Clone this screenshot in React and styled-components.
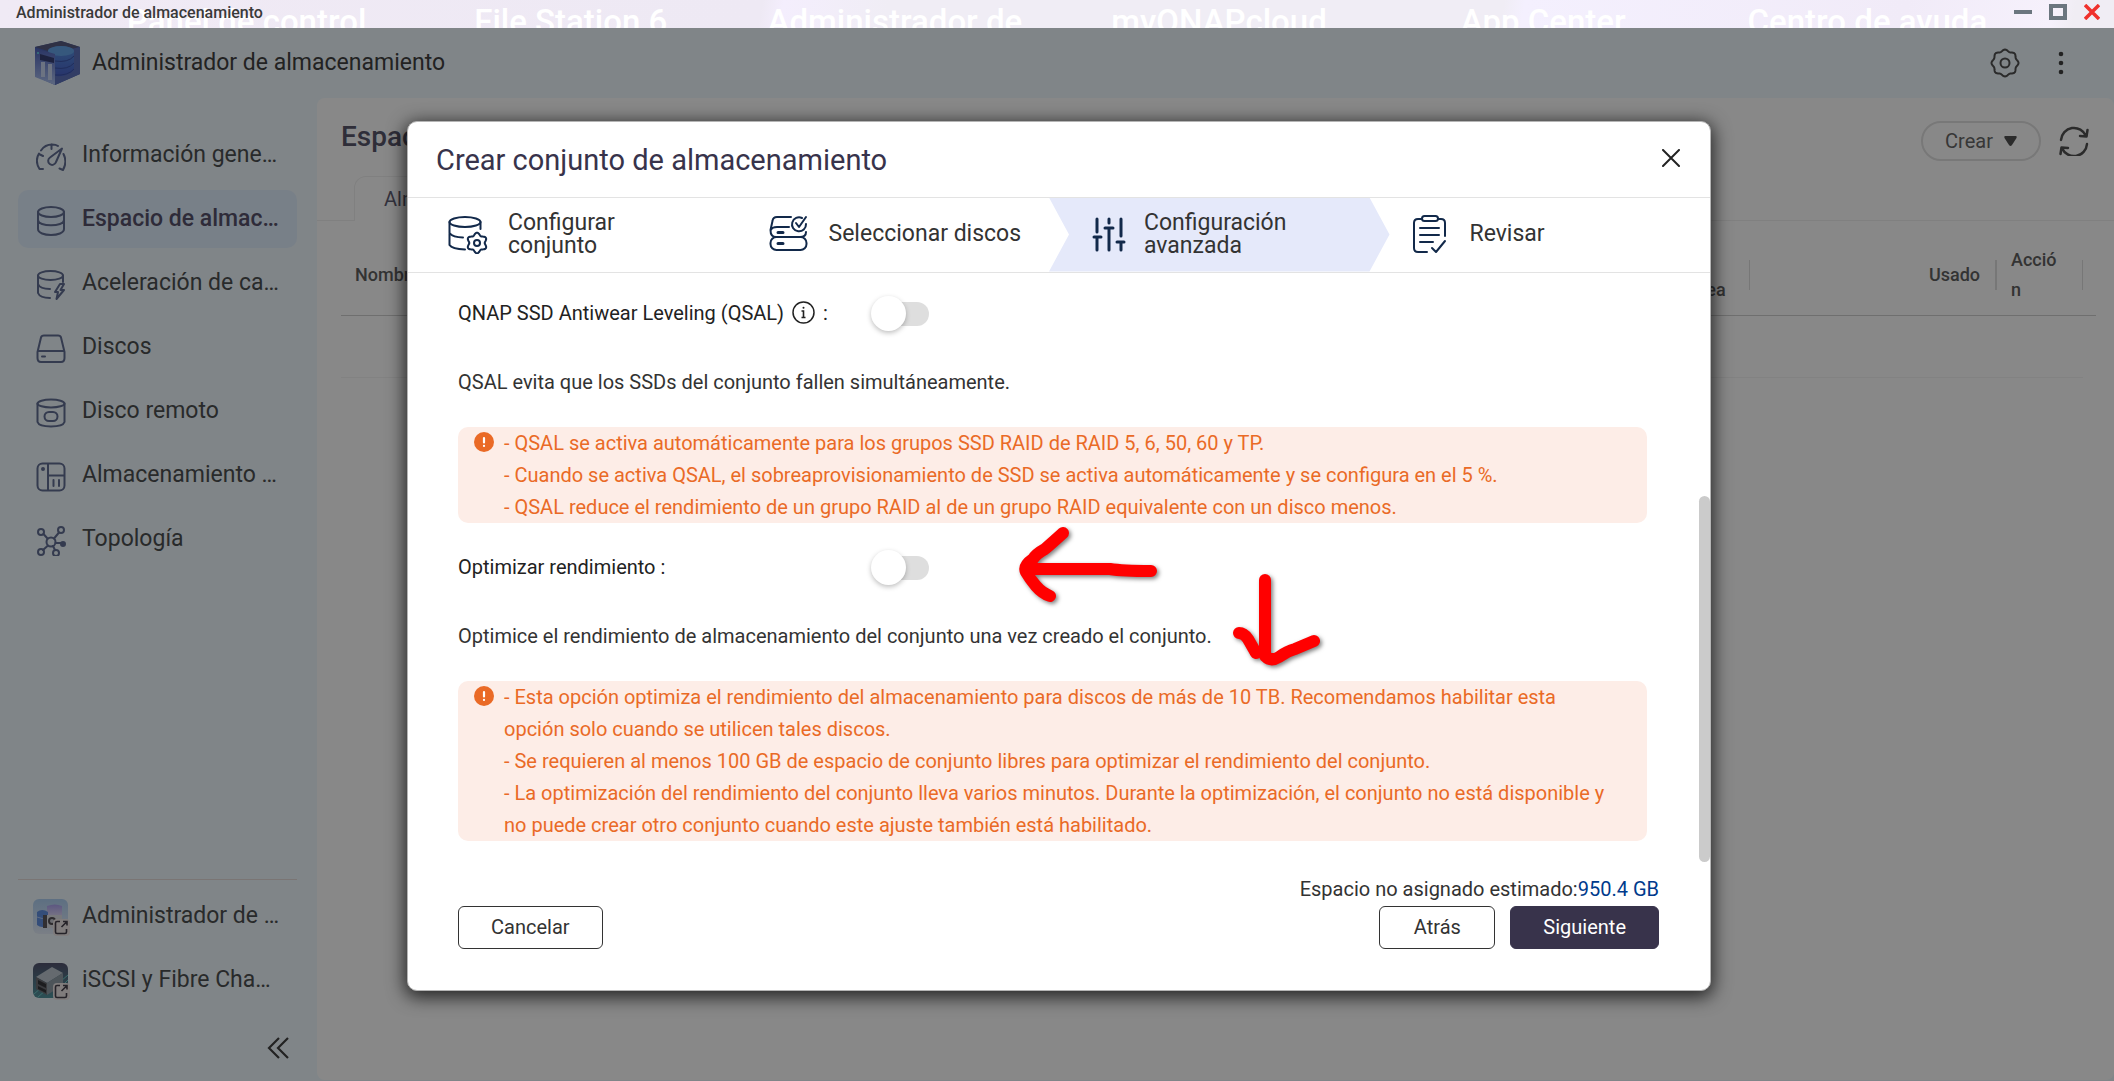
import React from "react";
import styled, { createGlobalStyle, css } from "styled-components";

const GlobalStyle = createGlobalStyle`
  * { box-sizing: border-box; }
  html, body, #root { height: 100%; }
  body {
    margin: 0;
    overflow: hidden;
    font-family: Roboto, "Liberation Sans", sans-serif;
    font-size: 20px;
    color: #333;
  }
  button { font: inherit; color: inherit; cursor: pointer; }
  h1, h2, p, ol, ul { margin: 0; padding: 0; }
  ol, ul { list-style: none; }
  svg { display: block; flex: none; }
`;

const Desktop = styled.div`
  height: 100%;
  display: flex;
  flex-direction: column;
`;

/* ---------- window title bar ---------- */

const TitleBar = styled.div`
  position: relative;
  flex: none;
  height: 28px;
  overflow: hidden;
  display: flex;
  align-items: center;
  justify-content: space-between;
  padding: 0 14px 4px 16px;
  background: linear-gradient(100deg, #f0eaf5 0%, #eee9f4 36%, #f4eefd 37%, #f0edf5 42%, #f0edf5 71%, #f4f0fe 72%, #f1ebf8 90%, #f6f1fc 97%, #f0edf4 98%);
`;

const DesktopLabels = styled.ul`
  position: absolute;
  inset: 6px 4% 0;
  display: grid;
  grid-template-columns: repeat(6, 1fr);
  color: #fff;
  font-size: 33px;
  line-height: 32px;
  font-weight: 500;
  text-align: center;
  white-space: nowrap;
`;

const WindowTitle = styled.span`
  position: relative;
  font-size: 16px;
  font-weight: 500;
  color: #3a3a3a;
`;

const WindowControls = styled.div`
  position: relative;
  display: flex;
  align-items: center;
  gap: 17px;
`;

const BareButton = styled.button`
  border: 0;
  padding: 0;
  background: none;
  display: grid;
  place-items: center;
`;

/* ---------- application window ---------- */

const AppWindow = styled.div`
  position: relative;
  flex: 1;
  min-height: 0;
  display: flex;
  flex-direction: column;
  background: #eff9ff;
`;

const AppHeader = styled.header`
  flex: none;
  height: 70px;
  display: flex;
  align-items: center;
  padding: 0 42px 1px 34px;
  gap: 11px;
`;

const AppTitle = styled.h1`
  flex: 1;
  font-size: 23px;
  font-weight: 400;
`;

const HeaderActions = styled.div`
  display: flex;
  align-items: center;
  gap: 30px;
`;

const AppBody = styled.div`
  flex: 1;
  min-height: 0;
  display: flex;
`;

const Sidebar = styled.nav`
  flex: none;
  width: 317px;
  padding: 28px 20px 16px 18px;
  display: flex;
  flex-direction: column;
  justify-content: space-between;
`;

const NavList = styled.ul`
  display: flex;
  flex-direction: column;
  gap: 6px;
`;

const BottomNav = styled.div`
  display: flex;
  flex-direction: column;
  border-top: 1px solid #e3d8d6;
  padding-top: 7px;
`;

const NavLink = styled.a`
  height: 58px;
  display: flex;
  align-items: center;
  gap: 16px;
  padding: 0 18px;
  border-radius: 10px;
  font-size: 23px;
  line-height: 32px;
  white-space: nowrap;
  text-decoration: none;
  color: #3f4344;
  ${(p) => p.$small && css`
    padding-left: 15px;
    gap: 12px;
  `}
  ${(p) => p.$active && css`
    background: #dfeeff;
    color: #4a4560;
    font-weight: 500;
  `}
  svg { margin-top: 3px; }
`;

const Collapse = styled(BareButton)`
  align-self: flex-end;
  margin: 22px 6px 0 0;
  width: 26px;
  height: 34px;
`;

const Content = styled.main`
  flex: 1;
  min-width: 0;
  margin-bottom: 1px;
  background: #fff;
  border-radius: 8px;
`;

const ContentHead = styled.div`
  height: 78px;
  display: flex;
  align-items: flex-start;
  justify-content: space-between;
  padding: 23px 25px 0 24px;
`;

const PageTitle = styled.h2`
  font-size: 28px;
  line-height: 32px;
  font-weight: 500;
  color: #4c4a60;
`;

const PageActions = styled.div`
  display: flex;
  align-items: center;
  gap: 18px;
`;

const CreateButton = styled.button`
  height: 40px;
  width: 120px;
  display: flex;
  align-items: center;
  justify-content: center;
  gap: 11px;
  border: 2px solid #dedede;
  border-radius: 20px;
  background: none;
  color: #5c5c5c;
`;

const TabStrip = styled.div`
  display: flex;
  &::before { content: ""; width: 37px; border-bottom: 1px solid #eee; }
  &::after { content: ""; flex: 1; border-bottom: 1px solid #eee; }
`;

const Tab = styled.button`
  height: 45px;
  padding: 0 29px;
  border: 1px solid #eee;
  border-bottom: 0;
  border-radius: 12px 12px 0 0;
  background: none;
  color: #55536a;
`;

const TableWrap = styled.div`
  padding: 15px 18px 0 24px;
`;

const PoolTable = styled.table`
  width: 100%;
  table-layout: fixed;
  border-collapse: collapse;
  td { height: 62px; padding: 0; }
  td:first-child { border-bottom: 1px solid #f3f3f3; }
`;

const HeadCell = styled.th`
  height: 79px;
  padding: 0;
  width: ${(p) => p.$width || "auto"};
  border-bottom: 1px solid #ccc;
  font-size: 18px;
  line-height: 30px;
  font-weight: 500;
  text-align: ${(p) => p.$align || "left"};
  color: #555;
`;

const HeadInner = styled.div`
  display: flex;
  align-items: center;
  justify-content: space-between;
  padding-left: 14px;
  &::after {
    content: "";
    width: ${(p) => (p.$thick ? "2px" : "1px")};
    height: 30px;
    background: #ddd;
  }
`;

const HeadText = styled.span`
  flex: 1;
  padding-right: ${(p) => p.$pad || "15px"};
  word-break: ${(p) => (p.$break ? "break-all" : "normal")};
`;

/* ---------- dialog ---------- */

const Backdrop = styled.div`
  position: absolute;
  inset: 0;
  display: flex;
  align-items: center;
  justify-content: center;
  padding: 2px 0 0 4px;
  background: rgba(17, 17, 17, 0.5);
`;

const Dialog = styled.section`
  position: relative;
  width: 100%;
  max-width: 1304px;
  display: flex;
  flex-direction: column;
  background: #fff;
  border: 1px solid #b5b5b5;
  border-radius: 10px;
  box-shadow: 0 4px 18px 2px rgba(0, 0, 0, 0.75);
`;

const DialogHead = styled.header`
  height: 75px;
  display: flex;
  align-items: center;
  justify-content: space-between;
  padding: 2px 27px 0 28px;
`;

const DialogTitle = styled.h2`
  font-size: 29px;
  line-height: 36px;
  font-weight: 400;
  color: #38334b;
`;

const CloseButton = styled(BareButton)`
  width: 24px;
  height: 28px;
  padding-bottom: 4px;
`;

const Steps = styled.ol`
  height: 76px;
  display: grid;
  grid-template-columns: repeat(4, 1fr);
  padding-right: 20px;
  border-top: 1px solid #e3e3e3;
  border-bottom: 1px solid #e3e3e3;
`;

const Step = styled.li`
  display: flex;
  align-items: center;
  gap: 20px;
  padding: 0 0 2px 40px;
  font-size: 23px;
  line-height: 23px;
  color: #333;
  ${(p) => p.$active && css`
    margin-right: -20px;
    padding-right: 60px;
    gap: 15px;
    background: #e5e9fa;
    clip-path: polygon(0 0, calc(100% - 20px) 0, 100% 50%, calc(100% - 20px) 100%, 0 100%, 20px 50%);
  `}
`;

const StepText = styled.span`
  max-width: ${(p) => (p.$narrow ? "160px" : "none")};
`;

const DialogBody = styled.div`
  display: flex;
  justify-content: space-between;
`;

const Settings = styled.div`
  flex: 1;
  padding: 23px 52px 21px 50px;
`;

const ScrollRail = styled.div`
  width: 11px;
  display: flex;
  align-items: flex-end;
  &::after {
    content: "";
    width: 11px;
    height: 62%;
    border-radius: 6px;
    background: #cbcbcb;
  }
`;

const SettingRow = styled.div`
  display: grid;
  grid-template-columns: 413px 1fr;
  align-items: center;
  height: 36px;
  color: #222;
`;

const SettingLabel = styled.label`
  display: flex;
  align-items: center;
  gap: 8px;
  padding-bottom: 2px;
  line-height: 32px;
`;

const Switch = styled.input`
  appearance: none;
  margin: 0;
  position: relative;
  width: 58px;
  height: 24px;
  border-radius: 12px;
  background: linear-gradient(90deg, transparent 12px, #dedede 12px);
  &::before {
    content: "";
    position: absolute;
    top: -6px;
    left: 0;
    width: 35px;
    height: 35px;
    border-radius: 50%;
    background: #fff;
    box-shadow: 0 2px 5px rgba(0, 0, 0, 0.25);
  }
`;

const Hint = styled.p`
  margin: 34px 0 29px;
  line-height: 32px;
`;

const Alert = styled.div`
  display: flex;
  align-items: flex-start;
  gap: 10px;
  margin-bottom: 27px;
  padding: 0 32px 0 16px;
  border-radius: 10px;
  background: #fdede7;
  color: #ea6a26;
  line-height: 32px;
  svg { margin-top: 5px; }
  &:last-child { margin-bottom: 0; }
`;

const DialogFoot = styled.footer`
  padding: 11px 51px 41px 50px;
`;

const Estimate = styled.p`
  margin-bottom: 1px;
  text-align: right;
  line-height: 32px;
  color: #333;
  strong { font-weight: 400; color: #003a8c; }
`;

const FootButtons = styled.div`
  display: flex;
  gap: 15px;
`;

const Button = styled.button`
  height: 43px;
  min-width: 116px;
  padding: 0 32px;
  border: 1px solid ${(p) => (p.$primary ? "#38334b" : "#333")};
  border-radius: 6px;
  background: ${(p) => (p.$primary ? "#38334b" : "#fff")};
  color: ${(p) => (p.$primary ? "#fff" : "#333")};
  &:first-child { margin-right: auto; }
`;

const Marks = styled.svg`
  position: absolute;
  left: 592px;
  top: 358px;
  pointer-events: none;
  filter: drop-shadow(2px 2px 2px rgba(0, 0, 0, 0.5));
`;

/* ---------- icons ---------- */

const Line = ({ size = 30, w = 2, color = "#57648c", children }) => (
  <svg width={size} height={size} viewBox="0 0 30 30" fill="none" stroke={color} strokeWidth={w} strokeLinecap="round" strokeLinejoin="round" aria-hidden="true">
    {children}
  </svg>
);

const GaugeIcon = () => (
  <Line>
    <path d="M7 27 H3.500 Q-1.500 19 3 11.500 M5 8.500 Q9 2.500 16 2.500 Q20 2.500 22 4 M15.500 2.500 V7 M27.500 12 Q31.500 20 27 28 L23.500 26.500 M3 12 L7 14" />
    <path d="M26 6.500 L20 20 A4 4 0 1 1 14 15.500 Z" />
  </Line>
);
const DatabaseIcon = () => (
  <Line>
    <ellipse cx="15" cy="6" rx="13" ry="5" />
    <path d="M2 6 V23 C2 31 28 31 28 23 V6 M2 14 C2 21 28 21 28 14" />
  </Line>
);
const CacheIcon = () => (
  <Line>
    <ellipse cx="14.500" cy="5.500" rx="12.500" ry="4.500" />
    <path d="M2 5.500 V23 Q4 28 14 28 M27 5.500 V12 M2 14 Q4 19 14 19 M24 14 L19 22 H22 L20.500 29 L28 20 H24.500 L28 14 Z" />
  </Line>
);
const DiskIcon = () => (
  <Line>
    <path d="M5 3.500 Q5.500 1.500 8 1.500 H22 Q24.500 1.500 25 3.500 L28.500 18 V24 Q28.500 28 25 28 H5 Q1.500 28 1.500 24 V18 Z M2 17 H28 M6 22.500 H9" />
  </Line>
);
const RemoteIcon = () => (
  <Line>
    <ellipse cx="15" cy="5.500" rx="13.500" ry="4" />
    <path d="M1.500 5.500 V24 Q3 28.500 15 28.500 Q27 28.500 28.500 24 V5.500" />
    <rect x="8.500" y="14" width="13" height="9" rx="4.500" />
  </Line>
);
const ExternalIcon = () => (
  <Line>
    <rect x="1.500" y="1.500" width="27" height="27" rx="5" />
    <path d="M12 2 V28 M12 13.500 H28 M17.500 18 V24 M23 18 V24" />
    <circle cx="7" cy="7" r="1" />
  </Line>
);
const TopologyIcon = () => (
  <Line>
    <circle cx="15" cy="16" r="4.500" />
    <circle cx="5" cy="6" r="3" />
    <circle cx="25" cy="4" r="3" />
    <circle cx="5" cy="26" r="3" />
    <circle cx="20" cy="27" r="3" />
    <circle cx="27" cy="18" r="2" fill="#57648c" />
    <path d="M7.500 8 L11.500 12.500 M23 6.500 L18 12.500 M7 24 L12 19.500 M19 24 L17 20 M19.500 17 H26" />
  </Line>
);

const ShortcutBadge = () => (
  <g>
    <rect x="20" y="20" width="17" height="17" rx="4" fill="#eee7e7" />
    <path d="M27 22.500 H24 Q22.500 22.500 22.500 24 V33 Q22.500 34.500 24 34.500 H32 Q33.500 34.500 33.500 33 V30 M30 22.500 H34 V26.500 M34 22.500 L28.500 28" fill="none" stroke="#3b3540" strokeWidth="1.600" />
  </g>
);
const SnapshotIcon = () => (
  <svg width="37" height="37" viewBox="0 0 37 37" aria-hidden="true">
    <defs>
      <linearGradient id="snapBg" x1="0" y1="0" x2="0" y2="1"><stop stopColor="#a9cdf2" /><stop offset="1" stopColor="#e3ecfa" /></linearGradient>
      <linearGradient id="snapDisk" x1="0" y1="0" x2="0" y2="1"><stop stopColor="#a79cf0" /><stop offset="1" stopColor="#e4def8" /></linearGradient>
    </defs>
    <rect width="35" height="35" rx="6" fill="url(#snapBg)" />
    <path d="M14 7 Q22 4 29 7 V19 H14 Z" fill="url(#snapDisk)" />
    <path d="M4 13 Q9 9 15 13 V26 Q9 30 4 26 Z" fill="#5688e0" />
    <path d="M4 18 Q9 21 15 18" fill="none" stroke="#a8c6f8" />
    <rect x="10" y="16" width="19" height="13" rx="1" fill="#dfe1e6" />
    <rect x="10" y="16" width="4" height="13" fill="#514c53" />
    <circle cx="19" cy="22" r="4" fill="#49454b" />
    <circle cx="19" cy="22" r="2" fill="#c6c9d3" />
    <ShortcutBadge />
  </svg>
);
const IscsiIcon = () => (
  <svg width="37" height="37" viewBox="0 0 37 37" aria-hidden="true">
    <defs>
      <linearGradient id="iscsiBg" x1="0" y1="0" x2="0" y2="1"><stop stopColor="#464765" /><stop offset="1" stopColor="#478e98" /></linearGradient>
    </defs>
    <rect width="35" height="35" rx="6" fill="url(#iscsiBg)" />
    <path d="M1 31 L8 25 M5 34 L13 27 M28 18 L35 12 M30 22 L35 17" stroke="#64c8c6" strokeWidth="1" />
    <path d="M3 14 L19 4 L30 10 L14 20 Z" fill="#b8c3cc" />
    <path d="M14 20 L30 10 V22 L14 32 Z" fill="#8997a1" />
    <path d="M3 14 L14 20 V32 L3 26 Z" fill="#62656b" />
    <path d="M5 17 L13 21 V25 L5 21 Z M5 23 L13 27 V30 L5 26 Z" fill="#26282c" />
    <ShortcutBadge />
  </svg>
);
const LogoIcon = () => (
  <svg width="47" height="44" viewBox="0 0 47 44" aria-hidden="true">
    <defs>
      <linearGradient id="logoSide" x1="0" y1="0" x2="0" y2="1"><stop stopColor="#4258b8" /><stop offset="1" stopColor="#a9bff0" /></linearGradient>
      <linearGradient id="logoDb" x1="0" y1="0" x2="0" y2="1"><stop stopColor="#4b8bdf" /><stop offset="1" stopColor="#3d56c6" /></linearGradient>
    </defs>
    <path d="M1 6 L27 0 L46 6 V33 L21 44 L1 35 Z" fill="#4058aa" />
    <path d="M1 6 L27 0 L46 6 L21 12 Z" fill="#4c5078" />
    <path d="M21 12 L46 6 V33 L21 44 Z" fill="#5269b8" />
    <path d="M14 10 C14 4 40 4 40 10 V29 Q34 36 22 35 L20 14 Z" fill="url(#logoDb)" />
    <ellipse cx="27" cy="10" rx="13" ry="5" fill="#5b9ee8" />
    <path d="M21 20 Q34 22 40 15 M21 27 Q34 29 40 22 M21 34 Q34 35 40 28" fill="none" stroke="#2f49a4" strokeWidth="1" />
    <path d="M1 7 L21 13 V44 L1 36 Z" fill="url(#logoSide)" />
    <path d="M6 13 L20 17 V22 L6 19 Z" fill="#28336c" />
    <path d="M9 21 V36 M16 23 V39" stroke="#c7d4f3" strokeWidth="4" />
    <circle cx="4" cy="12" r="1" fill="#5be0e8" />
  </svg>
);

const gear = (cx, cy, r, amp, teeth) => {
  const pts = [];
  for (let i = 0; i < 96; i++) {
    const a = (i / 96) * Math.PI * 2 - Math.PI / 2;
    const d = r + amp * Math.cos(a * teeth + (teeth * Math.PI) / 2);
    pts.push(`${(cx + d * Math.cos(a)).toFixed(2)} ${(cy + d * Math.sin(a)).toFixed(2)}`);
  }
  return `M${pts.join("L")}Z`;
};

const navy = "#12294a";
const Big = ({ children }) => (
  <svg width="40" height="40" viewBox="0 0 40 40" fill="none" stroke={navy} strokeWidth="2" strokeLinecap="round" strokeLinejoin="round" aria-hidden="true">
    {children}
  </svg>
);
const PoolStepIcon = () => (
  <Big>
    <ellipse cx="17" cy="8" rx="15.500" ry="5" />
    <path d="M1.500 8 V31 Q4 35 17 35.500 M32.500 8 V15 M1.500 19 Q5 23.500 15 23.500" />
    <path d={gear(29, 29, 9, 1.3, 6)} />
    <ellipse cx="29" cy="29" rx="3" ry="3" />
  </Big>
);
const DisksStepIcon = () => (
  <Big>
    <path d="M22 3 H8 Q4 3 3.500 7 L1.500 16 Q1.500 23 7 23 H31 Q37 23 37 18 M20 13 H8 Q3 13 2 16" />
    <rect x="1.500" y="23" width="36" height="13" rx="6" />
    <path d="M9 18.500 H14 M9 29.500 H14" strokeWidth="3" />
    <path d="M33 4 A7 7 0 1 0 37 10 M27 9 L30 13 L37 3" />
  </Big>
);
const SlidersStepIcon = () => (
  <Big>
    <path d="M8 5 V18 M8 23 V36 M20 5 V9 M20 14 V36 M32 5 V22 M32 28 V36 M5 23 H12 M16 14 H24 M28 28 H35" strokeWidth="3" />
  </Big>
);
const ReviewStepIcon = () => (
  <Big>
    <path d="M12 5 H8 Q4 5 4 9 V34 Q4 38 8 38 H17 M28 5 H31 Q35 5 35 9 V22 M10 14 H29 M10 21 H29 M10 28 H23 M22 34 L26 38 L35 27" />
    <rect x="12" y="2" width="16" height="5" rx="2.500" />
  </Big>
);

const AlertIcon = () => (
  <svg width="20" height="20" viewBox="0 0 20 20" aria-hidden="true">
    <circle cx="10" cy="10" r="10" fill="#ea6a26" />
    <path d="M10 6 V10.500 M10 13.800 V14" stroke="#fff" strokeWidth="2.200" strokeLinecap="round" />
  </svg>
);
const InfoIcon = () => (
  <svg width="23" height="23" viewBox="0 0 23 23" fill="none" stroke="#222" aria-hidden="true">
    <circle cx="11.500" cy="11.500" r="10.500" strokeWidth="1.500" />
    <path d="M9.500 10 H11.500 V16.500 M9.500 16.500 H13.500" strokeWidth="1.600" />
    <circle cx="11.500" cy="6.700" r="1" fill="#222" stroke="none" />
  </svg>
);

/* ---------- page ---------- */

const desktopApps = ["Panel de control", "File Station 6", "Administrador de", "myQNAPcloud", "App Center", "Centro de ayuda"];

const navItems = [
  ["Información gene…", GaugeIcon],
  ["Espacio de almac…", DatabaseIcon, true],
  ["Aceleración de ca…", CacheIcon],
  ["Discos", DiskIcon],
  ["Disco remoto", RemoteIcon],
  ["Almacenamiento …", ExternalIcon],
  ["Topología", TopologyIcon],
];

const shortcuts = [
  ["Administrador de …", SnapshotIcon],
  ["iSCSI y Fibre Cha…", IscsiIcon],
];

const steps = [
  ["Configurar conjunto", PoolStepIcon],
  ["Seleccionar discos", DisksStepIcon],
  ["Configuración avanzada", SlidersStepIcon],
  ["Revisar", ReviewStepIcon],
];

function PoolDialog() {
  return (
    <Dialog role="dialog" aria-labelledby="dialog-title">
      <DialogHead>
        <DialogTitle id="dialog-title">Crear conjunto de almacenamiento</DialogTitle>
        <CloseButton aria-label="Cerrar">
          <svg width="18" height="18" viewBox="0 0 18 18" stroke="#222" strokeWidth="2" strokeLinecap="round" aria-hidden="true">
            <path d="M1 1 L17 17 M17 1 L1 17" />
          </svg>
        </CloseButton>
      </DialogHead>
      <Steps>
        {steps.map(([text, Icon], i) => (
          <Step key={text} $active={i === 2}>
            <Icon />
            <StepText $narrow={i === 0 || i === 2}>{text}</StepText>
          </Step>
        ))}
      </Steps>
      <DialogBody>
        <Settings>
          <SettingRow>
            <SettingLabel htmlFor="qsal">QNAP SSD Antiwear Leveling (QSAL) <InfoIcon /> :</SettingLabel>
            <Switch id="qsal" type="checkbox" role="switch" />
          </SettingRow>
          <Hint>QSAL evita que los SSDs del conjunto fallen simultáneamente.</Hint>
          <Alert>
            <AlertIcon />
            <div>
              <p>- QSAL se activa automáticamente para los grupos SSD RAID de RAID 5, 6, 50, 60 y TP.</p>
              <p>- Cuando se activa QSAL, el sobreaprovisionamiento de SSD se activa automáticamente y se configura en el 5 %.</p>
              <p>- QSAL reduce el rendimiento de un grupo RAID al de un grupo RAID equivalente con un disco menos.</p>
            </div>
          </Alert>
          <SettingRow>
            <SettingLabel htmlFor="optimize">Optimizar rendimiento :</SettingLabel>
            <Switch id="optimize" type="checkbox" role="switch" />
          </SettingRow>
          <Hint>Optimice el rendimiento de almacenamiento del conjunto una vez creado el conjunto.</Hint>
          <Alert>
            <AlertIcon />
            <div>
              <p>- Esta opción optimiza el rendimiento del almacenamiento para discos de más de 10 TB. Recomendamos habilitar esta opción solo cuando se utilicen tales discos.</p>
              <p>- Se requieren al menos 100 GB de espacio de conjunto libres para optimizar el rendimiento del conjunto.</p>
              <p>- La optimización del rendimiento del conjunto lleva varios minutos. Durante la optimización, el conjunto no está disponible y no puede crear otro conjunto cuando este ajuste también está habilitado.</p>
            </div>
          </Alert>
        </Settings>
        <ScrollRail />
      </DialogBody>
      <DialogFoot>
        <Estimate>Espacio no asignado estimado:<strong>950.4 GB</strong></Estimate>
        <FootButtons>
          <Button>Cancelar</Button>
          <Button>Atrás</Button>
          <Button $primary>Siguiente</Button>
        </FootButtons>
      </DialogFoot>
      <Marks width="400" height="220" viewBox="0 30 400 220" fill="none" stroke="#f00" strokeWidth="12" strokeLinecap="round" strokeLinejoin="round" aria-hidden="true">
        <path d="M34 119 H110 Q122 121 151 121" />
        <path d="M63 83 Q52 93 45 99 Q36 104 33 109 Q23 116 26 122 Q30 129 36 136 Q42 143 50 146" />
        <path d="M265 130 V203" />
        <path d="M239 183 Q244 183 248 189 L256 203" />
        <path d="M265 206 Q271 212 279 207 Q287 201 295 199 L314 191" />
      </Marks>
    </Dialog>
  );
}

export default function App() {
  return (
    <Desktop>
      <GlobalStyle />
      <TitleBar>
        <DesktopLabels>
          {desktopApps.map((name) => <li key={name}>{name}</li>)}
        </DesktopLabels>
        <WindowTitle>Administrador de almacenamiento</WindowTitle>
        <WindowControls>
          <BareButton aria-label="Minimizar">
            <svg width="18" height="16" viewBox="0 0 18 16" aria-hidden="true"><rect y="6" width="18" height="4" fill="#6b767f" /></svg>
          </BareButton>
          <BareButton aria-label="Maximizar">
            <svg width="18" height="16" viewBox="0 0 18 16" aria-hidden="true"><rect x="2" y="2" width="14" height="12" fill="none" stroke="#6b767f" strokeWidth="4" /></svg>
          </BareButton>
          <BareButton aria-label="Cerrar ventana">
            <svg width="16" height="16" viewBox="0 0 16 16" aria-hidden="true"><path d="M1 1 L15 15 M15 1 L1 15" stroke="#f0312c" strokeWidth="3.500" /></svg>
          </BareButton>
        </WindowControls>
      </TitleBar>
      <AppWindow>
        <AppHeader>
          <LogoIcon />
          <AppTitle>Administrador de almacenamiento</AppTitle>
          <HeaderActions>
            <BareButton aria-label="Configuración">
              <Line color="#444" w={2}>
                <path d={gear(15, 15, 12.6, 0.9, 8)} />
                <circle cx="15" cy="15" r="4.500" />
              </Line>
            </BareButton>
            <BareButton aria-label="Más opciones">
              <svg width="22" height="24" viewBox="0 0 22 24" fill="#333" aria-hidden="true">
                <circle cx="11" cy="3" r="2.300" /><circle cx="11" cy="12" r="2.300" /><circle cx="11" cy="21" r="2.300" />
              </svg>
            </BareButton>
          </HeaderActions>
        </AppHeader>
        <AppBody>
          <Sidebar>
            <NavList>
              {navItems.map(([text, Icon, active]) => (
                <li key={text}><NavLink href="#" $active={active}><Icon />{text}</NavLink></li>
              ))}
            </NavList>
            <BottomNav>
              <NavList>
                {shortcuts.map(([text, Icon]) => (
                  <li key={text}><NavLink href="#" $small><Icon />{text}</NavLink></li>
                ))}
              </NavList>
              <Collapse aria-label="Contraer menú">
                <svg width="22" height="22" viewBox="0 0 22 22" fill="none" stroke="#333" strokeWidth="2.200" aria-hidden="true">
                  <path d="M12 1 L2 11 L12 21 M21 1 L11 11 L21 21" />
                </svg>
              </Collapse>
            </BottomNav>
          </Sidebar>
          <Content>
            <ContentHead>
              <PageTitle>Espacio</PageTitle>
              <PageActions>
                <CreateButton>
                  Crear
                  <svg width="13" height="10" viewBox="0 0 13 10" fill="#444" aria-hidden="true"><path d="M1 0 H12 Q13 0 12.500 2 L8 9 Q6.500 11 5 9 L0.500 2 Q0 0 1 0 Z" /></svg>
                </CreateButton>
                <BareButton aria-label="Actualizar">
                  <Line color="#444" w={2.5}>
                    <path d="M2 14 A13 13 0 0 1 27 10 M28.500 4 L27.500 10.500 L21 10 M28 18 A13 13 0 0 1 3 22 M1.500 28 L2.500 21.500 L9 22" />
                  </Line>
                </BareButton>
              </PageActions>
            </ContentHead>
            <TabStrip><Tab>Almacenamiento</Tab></TabStrip>
            <TableWrap>
              <PoolTable>
                <thead>
                  <tr>
                    <HeadCell><HeadInner><HeadText>Nombre</HeadText></HeadInner></HeadCell>
                    <HeadCell $width="77px"><HeadInner><HeadText>En<br />línea</HeadText></HeadInner></HeadCell>
                    <HeadCell $width="247px" $align="right"><HeadInner $thick><HeadText>Usado</HeadText></HeadInner></HeadCell>
                    <HeadCell $width="86px"><HeadInner><HeadText $pad="22px" $break>Acción</HeadText></HeadInner></HeadCell>
                    <HeadCell as="td" $width="13px" />
                  </tr>
                </thead>
                <tbody><tr><td colSpan={4} /><td /></tr></tbody>
              </PoolTable>
            </TableWrap>
          </Content>
        </AppBody>
        <Backdrop><PoolDialog /></Backdrop>
      </AppWindow>
    </Desktop>
  );
}
